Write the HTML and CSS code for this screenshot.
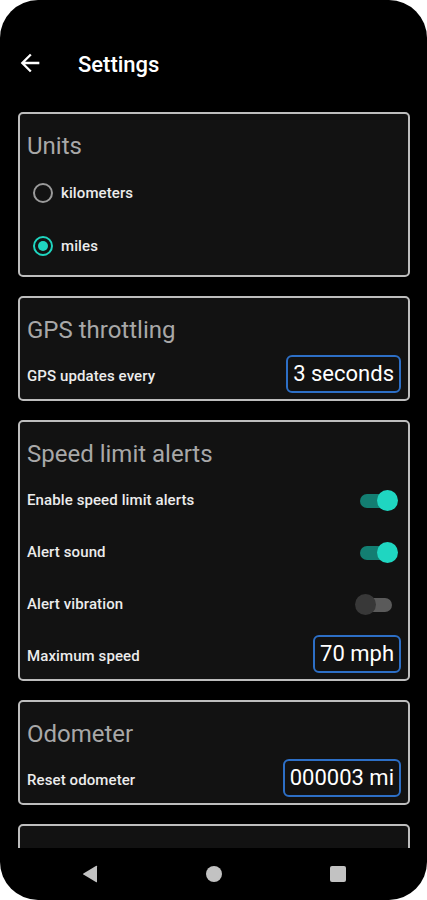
FILE: index.html
```html
<!DOCTYPE html>
<html lang="en">
<head>
<meta charset="utf-8">
<title>Settings</title>
<link rel="stylesheet" href="styles.css">
</head>
<body>
<div class="phone">
  <div class="screen">
    <header class="appbar">
      <svg class="back" viewBox="0 0 24 24" aria-hidden="true"><path d="M20 11H7.83l5.59-5.59L12 4l-8 8 8 8 1.41-1.41L7.83 13H20v-2z"/></svg>
      <h1 class="appbar-title">Settings</h1>
    </header>
    <main class="list">
      <section class="card card-units">
        <h2 class="card-title">Units</h2>
        <div class="radio-group">
          <div class="radio-row"><span class="radio"></span><span class="row-label">kilometers</span></div>
          <div class="radio-row"><span class="radio radio-on"></span><span class="row-label">miles</span></div>
        </div>
      </section>
      <section class="card">
        <h2 class="card-title">GPS throttling</h2>
        <div class="field-row">
          <span class="row-label">GPS updates every</span>
          <span class="input">3 seconds</span>
        </div>
      </section>
      <section class="card">
        <h2 class="card-title">Speed limit alerts</h2>
        <div class="toggles">
          <div class="toggle-row">
            <span class="row-label">Enable speed limit alerts</span>
            <span class="switch switch-on"><span class="track"></span><span class="thumb"></span></span>
          </div>
          <div class="toggle-row">
            <span class="row-label">Alert sound</span>
            <span class="switch switch-on"><span class="track"></span><span class="thumb"></span></span>
          </div>
          <div class="toggle-row">
            <span class="row-label">Alert vibration</span>
            <span class="switch"><span class="track"></span><span class="thumb"></span></span>
          </div>
        </div>
        <div class="field-row field-row-tight">
          <span class="row-label">Maximum speed</span>
          <span class="input">70 mph</span>
        </div>
      </section>
      <section class="card">
        <h2 class="card-title">Odometer</h2>
        <div class="field-row">
          <span class="row-label">Reset odometer</span>
          <span class="input">000003 mi</span>
        </div>
      </section>
      <section class="card card-partial"></section>
    </main>
  </div>
  <nav class="navbar">
    <span class="nav-item"><svg class="nav-back" viewBox="0 0 16 18" aria-hidden="true"><path d="M15 1.2 V16.8 Q15 17.6 14.3 17.2 L1.4 9.6 Q0.7 9 1.4 8.4 L14.3 0.8 Q15 0.4 15 1.2 Z"/></svg></span>
    <span class="nav-item"><span class="nav-home"></span></span>
    <span class="nav-item"><span class="nav-recent"></span></span>
  </nav>
</div>
</body>
</html>
```
FILE: styles.css
```css
* {
  box-sizing: border-box;
  margin: 0;
  padding: 0;
}

html,
body {
  background: #ffffff;
  overflow: hidden;
}

body {
  width: 427px;
  height: 900px;
  font-family: Roboto, "Noto Sans", Arial, sans-serif;
}

.phone {
  width: 427px;
  height: 900px;
  background: #000000;
  border-radius: 38px;
  overflow: hidden;
  display: flex;
  flex-direction: column;
}

.screen {
  height: 848px;
  overflow: hidden;
  flex-shrink: 0;
}

.appbar {
  height: 91px;
  padding-top: 35px;
  padding-left: 16px;
  display: flex;
  align-items: center;
}

.back {
  width: 28px;
  height: 28px;
  fill: #ffffff;
  flex-shrink: 0;
}

.appbar-title {
  margin-left: 34px;
  padding-top: 4px;
  font-size: 22px;
  line-height: 28px;
  font-weight: 500;
  color: #ffffff;
}

.list {
  padding: 21px 17px 0 18px;
  display: flex;
  flex-direction: column;
  gap: 19px;
}

.card {
  border: 2px solid #bdbdbd;
  border-radius: 5px;
  background: #121212;
  padding: 17px 7px 6px 7px;
}

.card-units {
  padding-bottom: 3px;
}

.card-partial {
  height: 60px;
  flex-shrink: 0;
}

.card-title {
  font-size: 24px;
  line-height: 30px;
  font-weight: 400;
  color: #a8a8a8;
}

.row-label {
  font-size: 15px;
  font-weight: 500;
  letter-spacing: 0.1px;
  color: #ececec;
}

.radio-group {
  margin-top: 5px;
}

.radio-row {
  height: 53px;
  display: flex;
  align-items: center;
}

.radio {
  width: 20px;
  height: 20px;
  margin-left: 6px;
  margin-right: 8px;
  border: 2px solid #9a9a9a;
  border-radius: 50%;
  display: grid;
  place-items: center;
}

.radio-on {
  border-color: #1fd5c0;
}

.radio-on::after {
  content: "";
  width: 10px;
  height: 10px;
  border-radius: 50%;
  background: #1fd5c0;
}

.field-row {
  margin-top: 10px;
  display: flex;
  justify-content: space-between;
  align-items: baseline;
}

.field-row-tight {
  margin-top: 5px;
}

.input {
  height: 38px;
  padding: 0 5px;
  border: 2px solid #2d6fc6;
  border-radius: 6px;
  font-size: 22px;
  line-height: 34px;
  color: #ffffff;
}

.toggles {
  margin-top: 5px;
}

.toggle-row {
  height: 52px;
  display: flex;
  justify-content: space-between;
  align-items: center;
}

.switch {
  position: relative;
  width: 43px;
  height: 21px;
  margin-right: 3px;
}

.track {
  position: absolute;
  left: 5px;
  top: 4px;
  width: 32px;
  height: 14px;
  border-radius: 7px;
  background: #5a5a5a;
}

.thumb {
  position: absolute;
  top: 0;
  left: 0;
  width: 21px;
  height: 21px;
  border-radius: 50%;
  background: #383838;
}

.switch-on .track {
  background: #137e72;
}

.switch-on .thumb {
  left: auto;
  right: 0;
  background: #1fd6c1;
}

.navbar {
  height: 52px;
  display: grid;
  grid-template-columns: 124px 124px 124px;
  justify-content: center;
  align-items: center;
}

.nav-item {
  display: flex;
  justify-content: center;
  align-items: center;
}

.nav-back {
  width: 16px;
  height: 18px;
  fill: #c2c2c2;
}

.nav-home {
  width: 16px;
  height: 16px;
  border-radius: 50%;
  background: #c2c2c2;
}

.nav-recent {
  width: 16px;
  height: 16px;
  border-radius: 2px;
  background: #c2c2c2;
}
```
